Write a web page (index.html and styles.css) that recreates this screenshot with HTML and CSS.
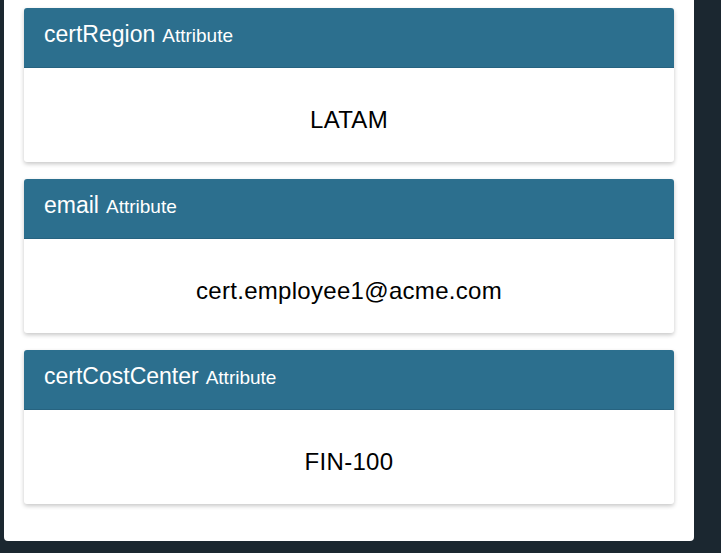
FILE: index.html
```html
<html>

<head>
	<link rel="stylesheet" href="styles.css">
</head>

<body>
	<div class="panel">
		<div class="card">
			<div class="card-head">certRegion <small>Attribute</small></div>
			<div class="card-body">LATAM</div>
		</div>
		<div class="card">
			<div class="card-head">email <small>Attribute</small></div>
			<div class="card-body">cert.employee1@acme.com</div>
		</div>
		<div class="card">
			<div class="card-head">certCostCenter <small>Attribute</small></div>
			<div class="card-body">FIN-100</div>
		</div>
	</div>
</body>

</html>
```
FILE: styles.css
```css
body {
	margin: 0;
	background-color: #1b2730;
	font-family: "Liberation Sans", Arial, sans-serif;
}

.panel {
	width: 650px;
	margin-left: 4px;
	padding: 8px 20px 37px 20px;
	background-color: #ffffff;
	border-radius: 0 0 4px 4px;
	display: flex;
	flex-direction: column;
	gap: 17px;
}

.card {
	background-color: #ffffff;
	border-radius: 3px;
	box-shadow: 0 2px 4px rgba(0, 0, 0, 0.22);
	overflow: hidden;
}

.card-head {
	height: 53px;
	padding: 0 0 6px 20px;
	display: flex;
	align-items: center;
	gap: 7px;
	background-color: #2c6f8e;
	border-bottom: 1px solid #276380;
	color: #ffffff;
	font-size: 23px;
}

.card-head small {
	font-size: 19px;
	padding-top: 2px;
}

.card-body {
	height: 84px;
	padding-top: 10px;
	display: flex;
	align-items: center;
	justify-content: center;
	font-size: 24px;
	letter-spacing: 0.3px;
	color: #000000;
}
```
